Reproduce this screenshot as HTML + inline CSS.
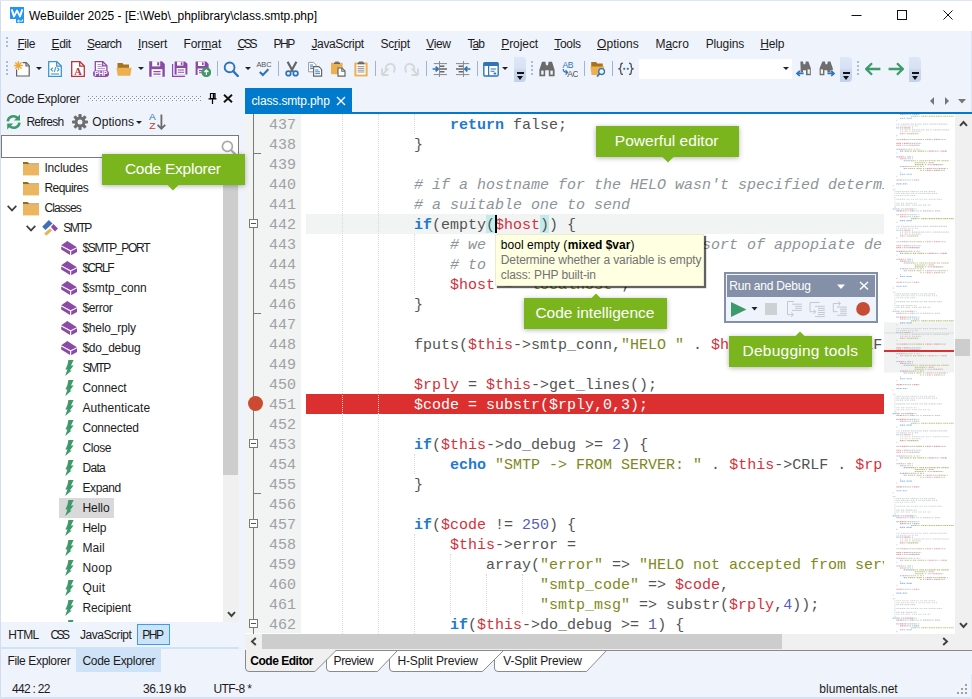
<!DOCTYPE html><html><head><meta charset="utf-8"><title>WeBuilder</title><style>
*{box-sizing:border-box;margin:0;padding:0}
html,body{width:972px;height:699px;overflow:hidden}
body{background:#eff3fb;font-family:"Liberation Sans",sans-serif;font-size:12px;color:#1b1b1b;position:relative}
.abs{position:absolute}
.t{position:absolute;white-space:nowrap;line-height:16px;height:16px}
u{text-decoration:underline;text-underline-offset:1px}
.sep{position:absolute;width:1px;background:#9fb3d6}
.grip{position:absolute;width:2px;height:2px;background:#a9bcdc}
.ovf{position:absolute;top:57px;width:12px;height:25px;border-radius:0 4px 4px 0;background:linear-gradient(#dfe7f6,#d6e1f3 45%,#c9d6ee 55%,#c3d1eb)}
.ovf:before{content:"";position:absolute;left:3px;top:15px;width:7px;height:2px;background:#111}
.ovf:after{content:"";position:absolute;left:3px;top:19px;border:3.5px solid transparent;border-top:4px solid #111;border-bottom:0}
.dd{position:absolute;width:0;height:0;border:3px solid transparent;border-top:3px solid #222;border-bottom:0}
#tree{left:1px;top:158px;width:238px;height:464px;background:#fff;overflow:hidden}
.row{position:absolute;left:0;height:20px;width:221px}
.row .t{top:2px}
#ed{left:245px;top:114px;width:639px;height:520px;background:#fff;overflow:hidden}
#gut{left:0;top:0;width:56px;height:519px;background:#f2f3f3}
.ln{position:absolute;left:24px;width:36px;height:20px;padding-top:2px;line-height:20px;font-family:"Liberation Mono",monospace;font-size:15px;color:#9da1a3}
.cl{position:absolute;left:61px;height:20px;padding-top:2px;line-height:20px;font-family:"Liberation Mono",monospace;font-size:15px;color:#545454;white-space:pre}
.k{color:#1f7ad0;font-weight:bold}
.v{color:#d5303a}
.s{color:#80881a}
.c{color:#8e9499;font-style:italic}
.n{color:#5560b8}
.guide{position:absolute;width:0;border-left:1px dotted #d9d9d9}
.call{position:absolute;background:#7ab51d;box-shadow:0 1px 5px rgba(0,0,0,.3)}
.call i{position:absolute;width:0;height:0;border:5.5px solid transparent}
.call i.dn{bottom:-5.5px;border-top:5.5px solid #7ab51d;border-bottom:0}
.call i.up{top:-5.5px;border-bottom:5.5px solid #7ab51d;border-top:0}
</style></head><body>
<div class="abs" style="left:0;top:0;width:972px;height:31px;background:#fff"></div>
<div class="abs" style="left:0;top:0;width:1px;height:699px;background:#d3ddef"></div>
<div class="abs" style="left:0;top:0;width:972px;height:1px;background:#dfe7f5"></div>
<div class="abs" style="left:0;top:697px;width:972px;height:2px;background:#d9e1f0"></div>
<div class="abs" style="left:971px;top:31px;width:1px;height:668px;background:#dfe6f3"></div>
<svg class="abs" style="left:10px;top:7px" width="14" height="16" viewBox="0 0 14 16"><path d="M0.400 0h13.200a0.400 0.400 0 0 1 0.400 0.400v15.200a0.400 0.400 0 0 1-0.400 0.400h-7.200a0.400 0.400 0 0 1-0.400-0.400v-3.600h-5.600a0.400 0.400 0 0 1-0.400-0.400v-11.200a0.400 0.400 0 0 1 0.400-0.400z" fill="#2394f2"/><path d="M1.700 2.400l2.300 7 3-5.800 3 5.800 2.300-7" fill="none" stroke="#fff" stroke-width="1.900" stroke-linejoin="round"/><path d="M12.600 12.400v1.700h-5M9.200 12.600l-1.700 1.500 1.700 1.500" fill="none" stroke="#fff" stroke-width="0.900"/></svg>
<span class="t" style="left:29px;top:8px;letter-spacing:0.006px;color:#000;">WeBuilder 2025 - [E:\Web\_phplibrary\class.smtp.php]</span>
<svg class="abs" style="left:840px;top:0" width="132" height="31" viewBox="0 0 132 31"><g stroke="#111" stroke-width="1" fill="none"><path d="M11.500 15.500h10"/><rect x="57.500" y="10.500" width="9" height="9"/><path d="M103.500 10.500l9 9M112.500 10.500l-9 9"/></g></svg>
<span class="t" style="left:17.5px;top:36px;letter-spacing:-0.478px;"><u>F</u>ile</span>
<span class="t" style="left:51.5px;top:36px;letter-spacing:-0.393px;"><u>E</u>dit</span>
<span class="t" style="left:87px;top:36px;letter-spacing:-0.644px;"><u>S</u>earch</span>
<span class="t" style="left:138px;top:36px;letter-spacing:-0.142px;"><u>I</u>nsert</span>
<span class="t" style="left:183.4px;top:36px;letter-spacing:-0.021px;">For<u>m</u>at</span>
<span class="t" style="left:237.4px;top:36px;letter-spacing:-2.288px;"><u>C</u>SS</span>
<span class="t" style="left:273.6px;top:36px;letter-spacing:-1.538px;">PHP</span>
<span class="t" style="left:311.5px;top:36px;letter-spacing:-0.391px;"><u>J</u>avaScript</span>
<span class="t" style="left:380.6px;top:36px;letter-spacing:-0.255px;">Sc<u>r</u>ipt</span>
<span class="t" style="left:426.3px;top:36px;letter-spacing:-0.364px;"><u>V</u>iew</span>
<span class="t" style="left:467.5px;top:36px;letter-spacing:-0.923px;">T<u>a</u>b</span>
<span class="t" style="left:501.2px;top:36px;letter-spacing:-0.058px;"><u>P</u>roject</span>
<span class="t" style="left:554.3px;top:36px;letter-spacing:-0.328px;"><u>T</u>ools</span>
<span class="t" style="left:597px;top:36px;letter-spacing:0.074px;"><u>O</u>ptions</span>
<span class="t" style="left:655.4px;top:36px;letter-spacing:0.015px;">M<u>a</u>cro</span>
<span class="t" style="left:705.7px;top:36px;letter-spacing:-0.143px;">Plugins</span>
<span class="t" style="left:760.3px;top:36px;letter-spacing:-0.226px;"><u>H</u>elp</span>
<div class="grip" style="left:6px;top:37px"></div>
<div class="grip" style="left:6px;top:41px"></div>
<div class="grip" style="left:6px;top:45px"></div>
<svg class="abs" style="left:14px;top:61px" width="16" height="16" viewBox="0 0 16 16"><path d="M8.600 1.700h3.600l3 3v10.300h-12.600v-6.400" fill="#fdfdfe" stroke="#606060" stroke-width="1.200"/><path d="M12 1.800v3.200h3.200" fill="none" stroke="#606060" stroke-width="1.200"/><g stroke="#f0a830" stroke-width="1.300" stroke-linecap="round"><path d="M4.400 0.600v7.800M0.500 4.500h7.800M1.700 1.800l5.400 5.400M7.100 1.800l-5.400 5.400"/></g></svg>
<svg class="abs" style="left:47px;top:61px" width="16" height="16" viewBox="0 0 16 16"><path d="M1.700 0.700h8.200l4.400 4.400v10.200h-12.600z" fill="#fff" stroke="#3f96cc" stroke-width="1.300"/><path d="M9.700 0.800v4.400h4.400" fill="none" stroke="#3f96cc" stroke-width="1.300"/><path d="M5.800 6.600l-1.800 1.900 1.800 1.900M10.200 6.600l1.800 1.900-1.800 1.900M8.800 6.200l-1.500 4.600" fill="none" stroke="#3f96cc" stroke-width="1.100"/><path d="M4 13h8" stroke="#3f96cc" stroke-width="1.100"/></svg>
<svg class="abs" style="left:70px;top:61px" width="16" height="16" viewBox="0 0 16 16"><path d="M1.700 0.700h8.200l4.400 4.400v10.200h-12.600z" fill="#fff" stroke="#b5363a" stroke-width="1.300"/><path d="M9.700 0.800v4.400h4.400" fill="none" stroke="#b5363a" stroke-width="1.300"/><text x="8" y="13.600" text-anchor="middle" font-family="Liberation Serif" font-weight="bold" font-size="10.500" fill="#b5363a">A</text></svg>
<svg class="abs" style="left:93px;top:61px" width="16" height="16" viewBox="0 0 16 16"><path d="M2.300 0.700h7.600l4 4v6h-11.600z" fill="#fff" stroke="#8b4aa8" stroke-width="1.300"/><path d="M9.700 0.800v4h4" fill="none" stroke="#8b4aa8" stroke-width="1.300"/><path d="M4.400 3.600h4.200M4.400 5.600h5.600M4.400 7.600h7.600" stroke="#b48ccc" stroke-width="1"/><rect x="0" y="9.400" width="16" height="6.600" rx="3.300" fill="#8b4aa8"/><text x="8" y="15" text-anchor="middle" font-family="Liberation Sans" font-weight="bold" font-size="6.400" fill="#fff">PHP</text></svg>
<svg class="abs" style="left:116px;top:61px" width="16" height="16" viewBox="0 0 16 16"><path d="M1.5 2h5l1 1.5h5.5v4h-11.5z" fill="#a8741a"/><path d="M0.4 6.8h15.2l-1.3 8h-12.6z" fill="#ecb050"/></svg>
<svg class="abs" style="left:149px;top:61px" width="16" height="16" viewBox="0 0 16 16"><path d="M0.200 0.200h12.800l2.800 2.800v12.800h-15.600z" fill="#8b4aa8"/><rect x="3.200" y="0.200" width="8" height="5.200" fill="#fff"/><rect x="8.200" y="1.200" width="2" height="3.200" fill="#8b4aa8"/><rect x="2.600" y="8.200" width="10.800" height="7.600" fill="#fff"/><path d="M4.400 10.600h7.200M4.400 13.200h7.200" stroke="#8b4aa8" stroke-width="1.300"/></svg>
<svg class="abs" style="left:172px;top:61px" width="16" height="16" viewBox="0 0 16 16"><path d="M0.6 3v12.4h12.4" fill="none" stroke="#8b4aa8" stroke-width="1.2"/><path d="M2.6 0.6h10.4l2.4 2.2v10.8h-12.8z" fill="#8b4aa8"/><rect x="5" y="0.6" width="6.4" height="4" fill="#fff"/><rect x="8.8" y="1.3" width="1.6" height="2.6" fill="#8b4aa8"/><rect x="4.6" y="7" width="8.8" height="6.6" fill="#fff"/><path d="M5.8 9h6.4M5.8 11.2h6.4" stroke="#8b4aa8" stroke-width="1.1"/></svg>
<svg class="abs" style="left:195px;top:61px" width="16" height="16" viewBox="0 0 16 16"><path d="M0.6 0.6h10.6l2.4 2.4v11h-13z" fill="#8b4aa8"/><rect x="3" y="0.6" width="6.6" height="4.4" fill="#fff"/><rect x="7" y="1.3" width="1.6" height="2.8" fill="#8b4aa8"/><rect x="2.6" y="7.6" width="8" height="6.4" fill="#fff"/><path d="M4 9.6h3M4 11.8h3" stroke="#8b4aa8" stroke-width="1.1"/><circle cx="11.300" cy="11.200" r="4.900" fill="#3d9a6a"/><path d="M11.4 14v-4.6M9.4 11l2-2 2 2" fill="none" stroke="#fff" stroke-width="1.2"/></svg>
<svg class="abs" style="left:223px;top:61px" width="16" height="16" viewBox="0 0 16 16"><circle cx="6.6" cy="6.4" r="4.9" fill="none" stroke="#2f74b8" stroke-width="1.9"/><path d="M10.2 10.2l4.6 4.8" stroke="#2f74b8" stroke-width="2.4" stroke-linecap="round"/></svg>
<svg class="abs" style="left:256px;top:61px" width="16" height="16" viewBox="0 0 16 16"><text x="8" y="6.4" text-anchor="middle" font-family="Liberation Sans" font-size="7.4" fill="#555">ABC</text><path d="M3.8 11l3 3 5.6-5.8" fill="none" stroke="#2f74b8" stroke-width="2"/></svg>
<svg class="abs" style="left:284px;top:61px" width="16" height="16" viewBox="0 0 16 16"><path d="M3.6 0.8l5.4 10M12.4 0.8l-5.4 10" stroke="#666" stroke-width="2.2"/><circle cx="4.4" cy="12.4" r="2.3" fill="none" stroke="#2f74b8" stroke-width="1.7"/><circle cx="11.6" cy="12.4" r="2.3" fill="none" stroke="#2f74b8" stroke-width="1.7"/></svg>
<svg class="abs" style="left:307px;top:61px" width="16" height="16" viewBox="0 0 16 16"><path d="M1.6 1.4h5l2.4 2.4v7h-7.4z" fill="#fff" stroke="#999" stroke-width="1"/><path d="M3 4h3M3 5.8h3M3 7.6h3" stroke="#2f74b8" stroke-width="0.9"/><path d="M6.6 5.6h5.2l2.8 2.8v6.8h-8z" fill="#fff" stroke="#666" stroke-width="1.2"/><path d="M8.2 9h3.4M8.2 10.8h4.8M8.2 12.6h4.8" stroke="#2f74b8" stroke-width="0.9"/></svg>
<svg class="abs" style="left:330px;top:61px" width="16" height="16" viewBox="0 0 16 16"><path d="M5.4 0.6h3.2l0.8 1.4h-4.8z" fill="#777"/><rect x="1" y="1.8" width="11.6" height="11.4" fill="#ecb050"/><rect x="4" y="1.6" width="6" height="1.4" fill="#666"/><path d="M8 7h4l3 3v5.2h-7z" fill="#fff" stroke="#666" stroke-width="1.2"/><path d="M11.8 7.2v3h3" fill="none" stroke="#666" stroke-width="1.1"/></svg>
<svg class="abs" style="left:353px;top:61px" width="16" height="16" viewBox="0 0 16 16"><rect x="1.4" y="1.6" width="13.2" height="13.8" fill="#ecb050"/><rect x="3.4" y="3.4" width="9.2" height="10.2" fill="#fff"/><path d="M6.2 0.4h3.6l1.2 1.6h-6z" fill="#777"/><rect x="4.6" y="1.8" width="6.8" height="1.4" fill="#666"/><path d="M4.6 5.6h6.8M4.6 7.4h6.8M4.6 9.2h6.8M4.6 11h6.8" stroke="#888" stroke-width="0.9"/></svg>
<svg class="abs" style="left:380px;top:61px" width="16" height="16" viewBox="0 0 16 16"><path d="M2 14V7.6M2 14h6.4M2.4 13.6l6-6" fill="none" stroke="#d2d8da" stroke-width="1.8"/><path d="M6 9.6c-1-4 1-6.8 4.4-6.8 3.2 0 5 2.8 4 6.8l-0.6 2" fill="none" stroke="#d2d8da" stroke-width="1.8"/></svg>
<svg class="abs" style="left:404px;top:61px" width="16" height="16" viewBox="0 0 16 16"><path d="M14 14V7.6M14 14H7.6M13.6 13.6l-6-6" fill="none" stroke="#d2d8da" stroke-width="1.8"/><path d="M10 9.6c1-4-1-6.8-4.400-6.800-3.200 0-5 2.800-4 6.800l0.600 2" fill="none" stroke="#d2d8da" stroke-width="1.8"/></svg>
<svg class="abs" style="left:432px;top:61px" width="16" height="16" viewBox="0 0 16 16"><path d="M7.500 0v16" stroke="#777" stroke-width="0.8"/><path d="M1.800 2.600h13.200M1.800 13.600h13.200" stroke="#888" stroke-width="1"/><path d="M8 5.200h4.400M8 8h7M8 10.800h4.400" stroke="#666" stroke-width="1.6"/><path d="M0.600 8h5.400M3.600 5.600l2.600 2.400-2.600 2.400" fill="none" stroke="#2f74b8" stroke-width="1.7"/></svg>
<svg class="abs" style="left:455px;top:61px" width="16" height="16" viewBox="0 0 16 16"><path d="M8.500 0v16" stroke="#777" stroke-width="0.8"/><path d="M1 2.600h13.200M1 13.600h13.200" stroke="#888" stroke-width="1"/><path d="M3.600 5.200h4.400M1 8h7M3.600 10.800h4.400" stroke="#666" stroke-width="1.6"/><path d="M15.400 8h-5.400M12.400 5.600l-2.600 2.400 2.600 2.400" fill="none" stroke="#2f74b8" stroke-width="1.7"/></svg>
<svg class="abs" style="left:483px;top:61px" width="16" height="16" viewBox="0 0 16 16"><rect x="0.800" y="1.600" width="14.400" height="13.400" rx="1.200" fill="#fff" stroke="#2f74b8" stroke-width="1.400"/><rect x="0.800" y="1.600" width="14.400" height="3.400" fill="#2f74b8"/><path d="M5.600 5v10" stroke="#2f74b8" stroke-width="1.200"/><path d="M7.600 8h5.600M7.600 10.200h4" stroke="#2f74b8" stroke-width="1.100"/><rect x="10.600" y="11.600" width="2.600" height="1.800" fill="#2f74b8"/></svg>
<svg class="abs" style="left:539px;top:61px" width="16" height="16" viewBox="0 0 16 16"><path d="M3 0.800h3.400l0.600 3.400h2l0.600-3.400h3.400l2.600 8v6.400h-5.800v-6h-3.600v6h-5.800v-6.400z" fill="#6a6a6a"/><rect x="2.200" y="9.600" width="2.400" height="4" fill="#eff3fb"/><rect x="11.400" y="9.600" width="2.400" height="4" fill="#eff3fb"/></svg>
<svg class="abs" style="left:562px;top:61px" width="16" height="16" viewBox="0 0 16 16"><text x="5.800" y="7" text-anchor="middle" font-family="Liberation Sans" font-size="8.600" letter-spacing="-0.500" fill="#2f74b8">AB</text><text x="10.800" y="15.600" text-anchor="middle" font-family="Liberation Sans" font-size="8.600" letter-spacing="-0.500" fill="#555">AC</text><path d="M1.200 8c0 2.800 1.800 3.400 4 3.400M3.600 9.200l2 2.200-2 2.200" fill="none" stroke="#2f74b8" stroke-width="1.200"/></svg>
<svg class="abs" style="left:590px;top:61px" width="16" height="16" viewBox="0 0 16 16"><path d="M1.200 1h5l1 1.500h5.600v4h-11.600z" fill="#a8741a"/><path d="M0.400 5.600h13.800l-1 8.400h-11.600z" fill="#ecb050"/><circle cx="11.600" cy="10.600" r="2.900" fill="#eff3fb" stroke="#2f74b8" stroke-width="1.300"/><path d="M9.600 12.800l-2.600 2.800" stroke="#2f74b8" stroke-width="1.600"/></svg>
<svg class="abs" style="left:618px;top:61px" width="16" height="16" viewBox="0 0 16 16"><path d="M5 2.200c-2 0-2.200 0.800-2.200 2.200 0 1.800-0.200 3-1.600 3.400 1.400 0.400 1.600 1.600 1.600 3.400 0 1.400 0.200 2.200 2.200 2.200M11 2.200c2 0 2.200 0.800 2.200 2.200 0 1.800 0.200 3 1.600 3.400-1.400 0.400-1.600 1.600-1.600 3.400 0 1.400-0.200 2.200-2.200 2.200" fill="none" stroke="#555" stroke-width="1.300"/><circle cx="6.200" cy="7.800" r="1.100" fill="#2f74b8"/><circle cx="9.800" cy="7.800" r="1.100" fill="#2f74b8"/></svg>
<svg class="abs" style="left:796px;top:61px" width="16" height="16" viewBox="0 0 16 16"><path d="M4.400 0.600h2.600l0.500 2.600h1.800l0.500-2.600h2.600l2.400 6.600v7h-4.800v-5h-3v2h-2.400v-4z" fill="#6e6e6e"/><rect x="11.600" y="8.400" width="2.200" height="4.400" fill="#eff3fb"/><path d="M7.600 12.400h-6.400M3.800 9.800l-2.800 2.600 2.800 2.600" fill="none" stroke="#2f74b8" stroke-width="1.700"/></svg>
<svg class="abs" style="left:819px;top:61px" width="16" height="16" viewBox="0 0 16 16"><path d="M3.400 0.600h2.600l0.500 2.600h1.800l0.500-2.600h2.600l2.400 6.600v2h-2.400v2h-3v-2h-3v5h-4.800v-7z" fill="#6e6e6e"/><rect x="1.800" y="8.400" width="2.200" height="4.400" fill="#eff3fb"/><path d="M8.400 12.400h6.400M12.200 9.800l2.800 2.600-2.800 2.600" fill="none" stroke="#2f74b8" stroke-width="1.700"/></svg>
<svg class="abs" style="left:865px;top:61px" width="16" height="16" viewBox="0 0 16 16"><path d="M15.400 8h-13M7 2.200l-5.800 5.800 5.800 5.800" fill="none" stroke="#3d9a6a" stroke-width="2.300"/></svg>
<svg class="abs" style="left:888px;top:61px" width="16" height="16" viewBox="0 0 16 16"><path d="M0.600 8h13M9 2.200l5.800 5.800-5.800 5.800" fill="none" stroke="#3d9a6a" stroke-width="2.300"/></svg>
<div class="sep" style="left:217px;top:61px;height:15px"></div>
<div class="sep" style="left:278px;top:61px;height:15px"></div>
<div class="sep" style="left:375px;top:61px;height:15px"></div>
<div class="sep" style="left:426px;top:61px;height:15px"></div>
<div class="sep" style="left:477px;top:61px;height:15px"></div>
<div class="sep" style="left:584px;top:61px;height:15px"></div>
<div class="sep" style="left:612px;top:61px;height:15px"></div>
<div class="dd" style="left:36px;top:67px"></div>
<div class="dd" style="left:138px;top:67px"></div>
<div class="dd" style="left:245px;top:67px"></div>
<div class="dd" style="left:502px;top:67px"></div>
<div class="grip" style="left:6px;top:61px"></div>
<div class="grip" style="left:6px;top:65px"></div>
<div class="grip" style="left:6px;top:69px"></div>
<div class="grip" style="left:6px;top:73px"></div>
<div class="grip" style="left:531px;top:61px"></div>
<div class="grip" style="left:531px;top:65px"></div>
<div class="grip" style="left:531px;top:69px"></div>
<div class="grip" style="left:531px;top:73px"></div>
<div class="grip" style="left:857px;top:61px"></div>
<div class="grip" style="left:857px;top:65px"></div>
<div class="grip" style="left:857px;top:69px"></div>
<div class="grip" style="left:857px;top:73px"></div>
<div class="ovf" style="left:514px"></div>
<div class="ovf" style="left:840px"></div>
<div class="ovf" style="left:909px"></div>
<div class="abs" style="left:639px;top:59px;width:153px;height:20px;background:#fff"></div>
<div class="dd" style="left:783px;top:67px"></div>
<span class="t" style="left:6.4px;top:91px;letter-spacing:-0.259px;">Code Explorer</span>
<svg class="abs" style="left:88px;top:96px" width="113" height="6" viewBox="0 0 113 6" shape-rendering="crispEdges"><defs><pattern id="gp" width="4" height="4" patternUnits="userSpaceOnUse"><rect x="0" y="0" width="1" height="1" fill="#8f8f8f"/><rect x="2" y="2" width="1" height="1" fill="#8f8f8f"/><rect x="1" y="1" width="1" height="1" fill="#fff" opacity=".7"/><rect x="3" y="3" width="1" height="1" fill="#fff" opacity=".7"/></pattern></defs><rect width="113" height="6" fill="url(#gp)"/></svg>
<svg class="abs" style="left:208px;top:93px" width="9" height="11" viewBox="0 0 9 11"><path d="M2.500 0.500h4.500v5h-4.500zM0.500 5.800h8M4.500 6v5" fill="none" stroke="#000" stroke-width="1.200"/><path d="M5.600 0.500v5" stroke="#000" stroke-width="1.600"/></svg>
<svg class="abs" style="left:223px;top:94px" width="10" height="9" viewBox="0 0 10 9"><path d="M1 0.800l8 7.400M9 0.800l-8 7.400" stroke="#111" stroke-width="1.900"/></svg>
<svg class="abs" style="left:6px;top:114px" width="16" height="16" viewBox="0 0 16 16"><path d="M1.800 7.400a5.600 5.600 0 0 1 9.800-3.200" fill="none" stroke="#3d9a6a" stroke-width="2.600"/><path d="M14 0.400v6h-6z" fill="#3d9a6a"/><path d="M13.400 8.600a5.600 5.600 0 0 1-9.800 3.200" fill="none" stroke="#3d9a6a" stroke-width="2.600"/><path d="M1.200 15.600v-6h6z" fill="#3d9a6a"/></svg>
<span class="t" style="left:26.4px;top:114px;letter-spacing:-0.686px;">Refresh</span>
<svg class="abs" style="left:72px;top:114px" width="16" height="16" viewBox="0 0 16 16"><g fill="#6e6e6e"><circle cx="8" cy="8" r="5.400"/><g id="gt"><rect x="6.400" y="0" width="3.200" height="16" rx="0.800"/></g><rect x="6.400" y="0" width="3.200" height="16" rx="0.800" transform="rotate(45 8 8)"/><rect x="6.400" y="0" width="3.200" height="16" rx="0.800" transform="rotate(90 8 8)"/><rect x="6.400" y="0" width="3.200" height="16" rx="0.800" transform="rotate(135 8 8)"/></g><circle cx="8" cy="8" r="2.500" fill="#eff3fb"/></svg>
<span class="t" style="left:92.3px;top:114px;letter-spacing:0.058px;">Options</span>
<div class="dd" style="left:136px;top:121px"></div>
<svg class="abs" style="left:148px;top:113px" width="19" height="18" viewBox="0 0 19 18"><g transform="scale(1.180 1)"><text x="3.700" y="7.100" text-anchor="middle" font-family="Liberation Sans" font-size="8.600" fill="#2f74b8">A</text><text x="3.700" y="16.400" text-anchor="middle" font-family="Liberation Sans" font-size="8.800" fill="#c8402c">Z</text></g><path d="M13.400 1.400v14M9.600 11.800l3.800 4 3.800-4" fill="none" stroke="#6a6a6a" stroke-width="1.800"/></svg>
<div class="abs" style="left:1px;top:135px;width:238px;height:23px;background:#fff;border:1px solid #7a7a7a"></div>
<svg class="abs" style="left:221px;top:140px" width="16" height="16" viewBox="0 0 16 16"><circle cx="6.400" cy="6.400" r="5" fill="none" stroke="#a9a9a9" stroke-width="1.700"/><path d="M10 10l5 5" stroke="#a9a9a9" stroke-width="2.200"/></svg>
<div id="tree" class="abs">
<div class="row" style="top:0px"><svg class="abs" style="left:22px;top:3px" width="16" height="15" viewBox="0 0 16 15"><path d="M0 1h4.500l1.800 1.400h9.700v1h-16z" fill="#9a6a14"/><rect x="0" y="3.600" width="16" height="10.800" fill="#ecb661"/></svg><span class="t" style="left:43.4px;top:2px;letter-spacing:-0.156px;">Includes</span></div>
<div class="row" style="top:20px"><svg class="abs" style="left:22px;top:3px" width="16" height="15" viewBox="0 0 16 15"><path d="M0 1h4.500l1.800 1.400h9.700v1h-16z" fill="#9a6a14"/><rect x="0" y="3.600" width="16" height="10.800" fill="#ecb661"/></svg><span class="t" style="left:43.4px;top:2px;letter-spacing:-0.532px;">Requires</span></div>
<div class="row" style="top:40px"><svg class="abs" style="left:6px;top:7px" width="10" height="7" viewBox="0 0 10 7"><path d="M0.700 0.800l4.300 4.600 4.300-4.600" fill="none" stroke="#404040" stroke-width="1.700"/></svg><svg class="abs" style="left:22px;top:3px" width="16" height="15" viewBox="0 0 16 15"><path d="M0 1h4.500l1.800 1.400h9.700v1h-16z" fill="#9a6a14"/><rect x="0" y="3.600" width="16" height="10.800" fill="#ecb661"/></svg><span class="t" style="left:43.4px;top:2px;letter-spacing:-0.896px;">Classes</span></div>
<div class="row" style="top:60px"><svg class="abs" style="left:25px;top:7px" width="10" height="7" viewBox="0 0 10 7"><path d="M0.700 0.800l4.300 4.600 4.300-4.600" fill="none" stroke="#404040" stroke-width="1.700"/></svg><svg class="abs" style="left:41px;top:2px" width="17" height="16" viewBox="0 0 17 16"><path d="M6.800 0.100l3.700 3.500-7 6.400-3.300-3.300z" fill="#3f72b4"/><path d="M11.400 4.100l4.600 4.400-3 3.100-4.100-4.500z" fill="#8b4aa8"/><path d="M8.100 8.300l2 2.100-5.700 5.400-2.300-2.400z" fill="#e9b35c"/></svg><span class="t" style="left:62.3px;top:2px;letter-spacing:-1.445px;">SMTP</span></div>
<div class="row" style="top:80px"><svg class="abs" style="left:60px;top:2px" width="17" height="16" viewBox="0 0 17 16"><path d="M0.200 5.200l6.100-4.100 9.600 6.100-6.300 3.100z" fill="#8b4aa8"/><path d="M0.200 6.400l8.800 4.800v3.800l-8.800-5.400z" fill="#8b4aa8"/><path d="M10.200 11.200l5.800-3v3.800l-5.800 3.200z" fill="#8b4aa8"/></svg><span class="t" style="left:81.4px;top:2px;letter-spacing:-1.289px;">$SMTP_PORT</span></div>
<div class="row" style="top:100px"><svg class="abs" style="left:60px;top:2px" width="17" height="16" viewBox="0 0 17 16"><path d="M0.200 5.200l6.100-4.100 9.600 6.100-6.300 3.100z" fill="#8b4aa8"/><path d="M0.200 6.400l8.800 4.800v3.800l-8.800-5.400z" fill="#8b4aa8"/><path d="M10.200 11.200l5.800-3v3.800l-5.800 3.200z" fill="#8b4aa8"/></svg><span class="t" style="left:81.4px;top:2px;letter-spacing:-1.452px;">$CRLF</span></div>
<div class="row" style="top:120px"><svg class="abs" style="left:60px;top:2px" width="17" height="16" viewBox="0 0 17 16"><path d="M0.200 5.200l6.100-4.100 9.600 6.100-6.300 3.100z" fill="#8b4aa8"/><path d="M0.200 6.400l8.800 4.800v3.800l-8.800-5.400z" fill="#8b4aa8"/><path d="M10.200 11.200l5.800-3v3.800l-5.800 3.200z" fill="#8b4aa8"/></svg><span class="t" style="left:81.4px;top:2px;letter-spacing:-0.108px;">$smtp_conn</span></div>
<div class="row" style="top:140px"><svg class="abs" style="left:60px;top:2px" width="17" height="16" viewBox="0 0 17 16"><path d="M0.200 5.200l6.100-4.100 9.600 6.100-6.300 3.100z" fill="#8b4aa8"/><path d="M0.200 6.400l8.800 4.800v3.800l-8.800-5.400z" fill="#8b4aa8"/><path d="M10.200 11.200l5.800-3v3.800l-5.800 3.200z" fill="#8b4aa8"/></svg><span class="t" style="left:81.4px;top:2px;letter-spacing:-0.322px;">$error</span></div>
<div class="row" style="top:160px"><svg class="abs" style="left:60px;top:2px" width="17" height="16" viewBox="0 0 17 16"><path d="M0.200 5.200l6.100-4.100 9.600 6.100-6.300 3.100z" fill="#8b4aa8"/><path d="M0.200 6.400l8.800 4.800v3.800l-8.800-5.400z" fill="#8b4aa8"/><path d="M10.200 11.200l5.800-3v3.800l-5.800 3.200z" fill="#8b4aa8"/></svg><span class="t" style="left:81.4px;top:2px;letter-spacing:-0.197px;">$helo_rply</span></div>
<div class="row" style="top:180px"><svg class="abs" style="left:60px;top:2px" width="17" height="16" viewBox="0 0 17 16"><path d="M0.200 5.200l6.100-4.100 9.600 6.100-6.300 3.100z" fill="#8b4aa8"/><path d="M0.200 6.400l8.800 4.800v3.800l-8.800-5.400z" fill="#8b4aa8"/><path d="M10.200 11.200l5.800-3v3.800l-5.800 3.200z" fill="#8b4aa8"/></svg><span class="t" style="left:81.4px;top:2px;letter-spacing:-0.233px;">$do_debug</span></div>
<div class="row" style="top:200px"><svg class="abs" style="left:64px;top:2px" width="9" height="16" viewBox="0 0 9 16"><path d="M3.400 0h5.200l-2.600 5.600h2.600l-3.800 5h2l-6.600 5.400 2.200-6.600h-2l2-4.400z" fill="#3d9a6a"/></svg><span class="t" style="left:81.4px;top:2px;letter-spacing:-1.512px;">SMTP</span></div>
<div class="row" style="top:220px"><svg class="abs" style="left:64px;top:2px" width="9" height="16" viewBox="0 0 9 16"><path d="M3.400 0h5.200l-2.600 5.600h2.600l-3.800 5h2l-6.600 5.400 2.200-6.600h-2l2-4.400z" fill="#3d9a6a"/></svg><span class="t" style="left:81.4px;top:2px;letter-spacing:-0.066px;">Connect</span></div>
<div class="row" style="top:240px"><svg class="abs" style="left:64px;top:2px" width="9" height="16" viewBox="0 0 9 16"><path d="M3.400 0h5.200l-2.600 5.600h2.600l-3.800 5h2l-6.600 5.400 2.200-6.600h-2l2-4.400z" fill="#3d9a6a"/></svg><span class="t" style="left:81.4px;top:2px;letter-spacing:0.09px;">Authenticate</span></div>
<div class="row" style="top:260px"><svg class="abs" style="left:64px;top:2px" width="9" height="16" viewBox="0 0 9 16"><path d="M3.400 0h5.200l-2.600 5.600h2.600l-3.800 5h2l-6.600 5.400 2.200-6.600h-2l2-4.400z" fill="#3d9a6a"/></svg><span class="t" style="left:81.4px;top:2px;letter-spacing:-0.18px;">Connected</span></div>
<div class="row" style="top:280px"><svg class="abs" style="left:64px;top:2px" width="9" height="16" viewBox="0 0 9 16"><path d="M3.400 0h5.200l-2.600 5.600h2.600l-3.800 5h2l-6.600 5.400 2.200-6.600h-2l2-4.400z" fill="#3d9a6a"/></svg><span class="t" style="left:81.4px;top:2px;letter-spacing:-0.395px;">Close</span></div>
<div class="row" style="top:300px"><svg class="abs" style="left:64px;top:2px" width="9" height="16" viewBox="0 0 9 16"><path d="M3.400 0h5.200l-2.600 5.600h2.600l-3.800 5h2l-6.600 5.400 2.200-6.600h-2l2-4.400z" fill="#3d9a6a"/></svg><span class="t" style="left:81.4px;top:2px;letter-spacing:-0.649px;">Data</span></div>
<div class="row" style="top:320px"><svg class="abs" style="left:64px;top:2px" width="9" height="16" viewBox="0 0 9 16"><path d="M3.400 0h5.200l-2.600 5.600h2.600l-3.800 5h2l-6.600 5.400 2.200-6.600h-2l2-4.400z" fill="#3d9a6a"/></svg><span class="t" style="left:81.4px;top:2px;letter-spacing:-0.38px;">Expand</span></div>
<div class="row" style="top:340px"><div class="abs" style="left:58px;top:0;width:55px;height:20px;background:#d9d9d9"></div><svg class="abs" style="left:64px;top:2px" width="9" height="16" viewBox="0 0 9 16"><path d="M3.400 0h5.200l-2.600 5.600h2.600l-3.800 5h2l-6.600 5.400 2.200-6.600h-2l2-4.400z" fill="#3d9a6a"/></svg><span class="t" style="left:81.4px;top:2px;letter-spacing:-0.036px;">Hello</span></div>
<div class="row" style="top:360px"><svg class="abs" style="left:64px;top:2px" width="9" height="16" viewBox="0 0 9 16"><path d="M3.400 0h5.200l-2.600 5.600h2.600l-3.800 5h2l-6.600 5.400 2.200-6.600h-2l2-4.400z" fill="#3d9a6a"/></svg><span class="t" style="left:81.4px;top:2px;letter-spacing:-0.193px;">Help</span></div>
<div class="row" style="top:380px"><svg class="abs" style="left:64px;top:2px" width="9" height="16" viewBox="0 0 9 16"><path d="M3.400 0h5.200l-2.600 5.600h2.600l-3.800 5h2l-6.600 5.400 2.200-6.600h-2l2-4.400z" fill="#3d9a6a"/></svg><span class="t" style="left:81.4px;top:2px;letter-spacing:0.066px;">Mail</span></div>
<div class="row" style="top:400px"><svg class="abs" style="left:64px;top:2px" width="9" height="16" viewBox="0 0 9 16"><path d="M3.400 0h5.200l-2.600 5.600h2.600l-3.800 5h2l-6.600 5.400 2.200-6.600h-2l2-4.400z" fill="#3d9a6a"/></svg><span class="t" style="left:81.4px;top:2px;letter-spacing:0.305px;">Noop</span></div>
<div class="row" style="top:420px"><svg class="abs" style="left:64px;top:2px" width="9" height="16" viewBox="0 0 9 16"><path d="M3.400 0h5.200l-2.600 5.600h2.600l-3.800 5h2l-6.600 5.400 2.200-6.600h-2l2-4.400z" fill="#3d9a6a"/></svg><span class="t" style="left:81.4px;top:2px;letter-spacing:0.197px;">Quit</span></div>
<div class="row" style="top:440px"><svg class="abs" style="left:64px;top:2px" width="9" height="16" viewBox="0 0 9 16"><path d="M3.400 0h5.200l-2.600 5.600h2.600l-3.800 5h2l-6.600 5.400 2.200-6.600h-2l2-4.400z" fill="#3d9a6a"/></svg><span class="t" style="left:81.4px;top:2px;letter-spacing:-0.153px;">Recipient</span></div>
<div class="row" style="top:460px"><svg class="abs" style="left:64px;top:2px" width="9" height="16" viewBox="0 0 9 16"><path d="M3.400 0h5.200l-2.600 5.600h2.600l-3.800 5h2l-6.600 5.400 2.200-6.600h-2l2-4.400z" fill="#3d9a6a"/></svg><span class="t" style="left:81.4px;top:2px;letter-spacing:-0.937px;">Reset</span></div>
<div class="abs" style="left:222px;top:0;width:16px;height:464px;background:#f0f0f0"></div>
<div class="abs" style="left:222px;top:17px;width:15px;height:300px;background:#cdcdcd"></div>
<svg class="abs" style="left:225.5px;top:452.5px" width="9" height="7" viewBox="0 0 9 7"><path d="M1 1.200l3.500 3.800 3.500-3.800" fill="none" stroke="#404040" stroke-width="1.900"/></svg>
</div>
<div class="abs" style="left:1px;top:647px;width:238px;height:2px;background:#cfe3f8"></div>
<span class="t" style="left:8.3px;top:627px;letter-spacing:-0.555px;">HTML</span>
<span class="t" style="left:50.4px;top:627px;letter-spacing:-2.537px;">CSS</span>
<span class="t" style="left:80px;top:627px;letter-spacing:-0.458px;">JavaScript</span>
<div class="abs" style="left:137px;top:624px;width:33px;height:21px;background:#cce4f7;border:1px solid #3c9cf0"></div>
<span class="t" style="left:142.2px;top:627px;letter-spacing:-1.437px;">PHP</span>
<div class="abs" style="left:76px;top:649px;width:85px;height:23px;background:#cfe3f8"></div>
<span class="t" style="left:7.4px;top:653px;letter-spacing:-0.338px;">File Explorer</span>
<span class="t" style="left:82.4px;top:653px;letter-spacing:-0.292px;">Code Explorer</span>
<span class="t" style="left:12px;top:681px;letter-spacing:-0.71px;">442 : 22</span>
<span class="t" style="left:143px;top:681px;letter-spacing:-0.405px;">36.19 kb</span>
<span class="t" style="left:213.5px;top:681px;letter-spacing:-0.583px;">UTF-8 *</span>
<span class="t" style="left:819.3px;top:681px;letter-spacing:0.027px;">blumentals.net</span>
<svg class="abs" style="left:956px;top:683px" width="12" height="12" viewBox="0 0 12 12"><g fill="#a0a0a0"><rect x="9" y="1" width="2" height="2"/><rect x="5" y="5" width="2" height="2"/><rect x="9" y="5" width="2" height="2"/><rect x="1" y="9" width="2" height="2"/><rect x="5" y="9" width="2" height="2"/><rect x="9" y="9" width="2" height="2"/></g></svg>
<div class="abs" style="left:245px;top:88px;width:107px;height:25px;background:#007acc"></div>
<span class="t" style="left:251.5px;top:93px;letter-spacing:-0.133px;color:#fff;">class.smtp.php</span>
<svg class="abs" style="left:336px;top:96px" width="10" height="10" viewBox="0 0 10 10"><path d="M1 1l8 8M9 1l-8 8" stroke="#fff" stroke-width="1.400"/></svg>
<div class="abs" style="left:245px;top:112px;width:727px;height:2px;background:#007acc"></div>
<svg class="abs" style="left:929px;top:96px" width="42" height="10" viewBox="0 0 42 10"><path d="M5 1v8l-4-4zM16 1v8l4-4z" fill="#777"/><path d="M29 3h8l-4 4.500z" fill="#777"/></svg>
<div id="ed" class="abs">
<div id="gut" class="abs"></div>
<div class="abs" style="left:61px;top:100px;width:578px;height:20px;background:#f2f4f4"></div>
<div class="abs" style="left:61px;top:280px;width:578px;height:20px;background:#dc2f2f"></div>
<div class="guide" style="left:97px;top:0;height:520px"></div>
<div class="guide" style="left:133px;top:0;height:520px"></div>
<div class="guide" style="left:169px;top:0px;height:20px"></div>
<div class="guide" style="left:169px;top:120px;height:60px"></div>
<div class="guide" style="left:169px;top:340px;height:20px"></div>
<div class="guide" style="left:169px;top:420px;height:100px"></div>
<div class="guide" style="left:205px;top:440px;height:60px"></div>
<div class="guide" style="left:241px;top:460px;height:40px"></div>
<div class="guide" style="left:277px;top:460px;height:40px"></div>
<div class="abs" style="left:241px;top:101px;width:9px;height:18px;background:#c2ecec"></div>
<div class="abs" style="left:295px;top:101px;width:9px;height:18px;background:#c2ecec"></div>
<div class="ln" style="top:0px">437</div>
<div class="cl" style="top:0px">                <span class="k">return</span> false;</div>
<div class="ln" style="top:20px">438</div>
<div class="cl" style="top:20px">            }</div>
<div class="ln" style="top:40px">439</div>
<div class="ln" style="top:60px">440</div>
<div class="cl" style="top:60px">            <span class="c"># if a hostname for the HELO wasn&#x27;t specified determine</span></div>
<div class="ln" style="top:80px">441</div>
<div class="cl" style="top:80px">            <span class="c"># a suitable one to send</span></div>
<div class="ln" style="top:100px">442</div>
<div class="cl" style="top:100px">            <span class="k">if</span>(empty(<span class="v">$host</span>)) {</div>
<div class="ln" style="top:120px">443</div>
<div class="cl" style="top:120px">                <span class="c"># we need to determine some sort of appopiate default</span></div>
<div class="ln" style="top:140px">444</div>
<div class="cl" style="top:140px">                <span class="c"># to send to the server</span></div>
<div class="ln" style="top:160px">445</div>
<div class="cl" style="top:160px">                <span class="v">$host</span> = <span class="s">&quot;localhost&quot;</span>;</div>
<div class="ln" style="top:180px">446</div>
<div class="cl" style="top:180px">            }</div>
<div class="ln" style="top:200px">447</div>
<div class="ln" style="top:220px">448</div>
<div class="cl" style="top:220px">            fputs(<span class="v">$this</span>-&gt;smtp_conn,<span class="s">&quot;HELO &quot;</span> . <span class="v">$host</span> . <span class="v">$this</span>-&gt;CRLF);</div>
<div class="ln" style="top:240px">449</div>
<div class="ln" style="top:260px">450</div>
<div class="cl" style="top:260px">            <span class="v">$rply</span> = <span class="v">$this</span>-&gt;get_lines();</div>
<div class="ln" style="top:280px">451</div>
<div class="cl" style="top:280px;color:#fff">            $code = substr($rply,0,3);</div>
<div class="ln" style="top:300px">452</div>
<div class="ln" style="top:320px">453</div>
<div class="cl" style="top:320px">            <span class="k">if</span>(<span class="v">$this</span>-&gt;do_debug &gt;= <span class="n">2</span>) {</div>
<div class="ln" style="top:340px">454</div>
<div class="cl" style="top:340px">                <span class="k">echo</span> <span class="s">&quot;SMTP -&gt; FROM SERVER: &quot;</span> . <span class="v">$this</span>-&gt;CRLF . <span class="v">$rply</span>;</div>
<div class="ln" style="top:360px">455</div>
<div class="cl" style="top:360px">            }</div>
<div class="ln" style="top:380px">456</div>
<div class="ln" style="top:400px">457</div>
<div class="cl" style="top:400px">            <span class="k">if</span>(<span class="v">$code</span> != <span class="n">250</span>) {</div>
<div class="ln" style="top:420px">458</div>
<div class="cl" style="top:420px">                <span class="v">$this</span>-&gt;error =</div>
<div class="ln" style="top:440px">459</div>
<div class="cl" style="top:440px">                    array(<span class="s">&quot;error&quot;</span> =&gt; <span class="s">&quot;HELO not accepted from server&quot;</span>,</div>
<div class="ln" style="top:460px">460</div>
<div class="cl" style="top:460px">                          <span class="s">&quot;smtp_code&quot;</span> =&gt; <span class="v">$code</span>,</div>
<div class="ln" style="top:480px">461</div>
<div class="cl" style="top:480px">                          <span class="s">&quot;smtp_msg&quot;</span> =&gt; substr(<span class="v">$rply</span>,<span class="n">4</span>));</div>
<div class="ln" style="top:500px">462</div>
<div class="cl" style="top:500px">                <span class="k">if</span>(<span class="v">$this</span>-&gt;do_debug &gt;= <span class="n">1</span>) {</div>
<div class="abs" style="left:250px;top:101px;width:2px;height:18px;background:#000"></div>
<div class="abs" style="left:8px;top:0;width:1px;height:520px;background:#7a7a7a"></div>
<div class="abs" style="left:8px;top:39px;width:8px;height:1px;background:#7a7a7a"></div>
<div class="abs" style="left:8px;top:199px;width:8px;height:1px;background:#7a7a7a"></div>
<div class="abs" style="left:8px;top:379px;width:8px;height:1px;background:#7a7a7a"></div>
<div class="abs" style="left:4px;top:105px;width:9px;height:9px;background:#fff;border:1px solid #7a7a7a"></div><div class="abs" style="left:6px;top:109px;width:5px;height:1px;background:#555"></div>
<div class="abs" style="left:4px;top:325px;width:9px;height:9px;background:#fff;border:1px solid #7a7a7a"></div><div class="abs" style="left:6px;top:329px;width:5px;height:1px;background:#555"></div>
<div class="abs" style="left:4px;top:405px;width:9px;height:9px;background:#fff;border:1px solid #7a7a7a"></div><div class="abs" style="left:6px;top:409px;width:5px;height:1px;background:#555"></div>
<div class="abs" style="left:4px;top:505px;width:9px;height:9px;background:#fff;border:1px solid #7a7a7a"></div><div class="abs" style="left:6px;top:509px;width:5px;height:1px;background:#555"></div>
<div class="abs" style="left:3px;top:282px;width:15px;height:15px;border-radius:8px;background:#cc4a32"></div>
</div>
<div class="abs" style="left:884px;top:114px;width:71px;height:520px;background:#fff;overflow:hidden"><svg width="71" height="520" viewBox="0 0 71 520"><rect x="0" y="208.300" width="70" height="50.200" fill="#f1f2f2"/><rect x="0" y="218" width="70" height="2" fill="#e6e8e8"/><path d="M16.0 0.4h4.6M20.6 13.9h4.6M16.0 19.7h4.6M17.9 25.5h4.6M42.7 25.5h4.6M50.1 25.5h4.6M12.4 29.4h4.6M19.7 29.4h4.6M12.4 31.3h4.6M26.2 31.3h4.6M15.1 35.2h4.6M44.6 37.1h4.6M57.4 37.1h4.6M15.1 42.9h4.6M16.0 44.8h4.6M44.6 48.7h4.6M50.1 50.6h4.6M18.8 52.5h4.6M42.7 54.5h4.6M42.7 56.4h4.6M50.1 56.4h4.6M12.4 66.0h4.6M29.8 66.0h4.6M22.5 95.0h4.6M12.4 96.9h4.6M16.0 100.8h4.6M16.0 102.7h4.6M20.6 116.2h4.6M16.0 122.0h4.6M17.9 127.8h4.6M42.7 127.8h4.6M50.1 127.8h4.6M12.4 131.7h4.6M19.7 131.7h4.6M12.4 133.6h4.6M26.2 133.6h4.6M15.1 137.4h4.6M44.6 139.4h4.6M57.4 139.4h4.6M15.1 145.2h4.6M16.0 147.1h4.6M44.6 151.0h4.6M50.1 152.9h4.6M18.8 154.8h4.6M42.7 156.7h4.6M42.7 158.7h4.6M50.1 158.7h4.6M12.4 168.3h4.6M29.8 168.3h4.6M22.5 197.3h4.6M12.4 199.2h4.6M16.0 203.1h4.6M16.0 205.0h4.6M20.6 218.5h4.6M16.0 224.3h4.6M17.9 230.1h4.6M42.7 230.1h4.6M50.1 230.1h4.6M12.4 233.9h4.6M19.7 233.9h4.6M12.4 235.9h4.6M26.2 235.9h4.6M15.1 239.7h4.6M44.6 241.7h4.6M57.4 241.7h4.6M15.1 247.5h4.6M16.0 249.4h4.6M44.6 253.2h4.6M50.1 255.2h4.6M18.8 257.1h4.6M42.7 259.0h4.6M42.7 261.0h4.6M50.1 261.0h4.6M12.4 270.6h4.6M29.8 270.6h4.6M22.5 299.6h4.6M12.4 301.5h4.6M16.0 305.4h4.6M16.0 307.3h4.6M20.6 320.8h4.6M16.0 326.6h4.6M17.9 332.4h4.6M42.7 332.4h4.6M50.1 332.4h4.6M12.4 336.2h4.6M19.7 336.2h4.6M12.4 338.2h4.6M26.2 338.2h4.6M15.1 342.0h4.6M44.6 343.9h4.6M57.4 343.9h4.6M15.1 349.7h4.6M16.0 351.7h4.6M44.6 355.5h4.6M50.1 357.5h4.6M18.8 359.4h4.6M42.7 361.3h4.6M42.7 363.3h4.6M50.1 363.3h4.6M12.4 372.9h4.6M29.8 372.9h4.6M22.5 401.9h4.6M12.4 403.8h4.6M16.0 407.6h4.6M16.0 409.6h4.6M20.6 423.1h4.6M16.0 428.9h4.6M17.9 434.7h4.6M42.7 434.7h4.6M50.1 434.7h4.6M12.4 438.5h4.6M19.7 438.5h4.6M12.4 440.4h4.6M26.2 440.4h4.6M15.1 444.3h4.6M44.6 446.2h4.6M57.4 446.2h4.6M15.1 452.0h4.6M16.0 454.0h4.6M44.6 457.8h4.6M50.1 459.8h4.6M18.8 461.7h4.6M42.7 463.6h4.6M42.7 465.5h4.6M50.1 465.5h4.6M12.4 475.2h4.6M29.8 475.2h4.6M22.5 504.1h4.6M12.4 506.1h4.6M16.0 509.9h4.6M16.0 511.9h4.6" stroke="#e89a9e" stroke-width="1.100" stroke-dasharray="1.300 0.500" fill="none"/><path d="M20.6 0.4h6.4M28.0 0.4h0.9M34.4 0.4h0.9M34.4 2.3h1.8M27.1 4.3h0.9M12.4 6.2h0.9M14.2 13.9h6.4M25.2 13.9h1.8M28.0 13.9h0.9M21.6 19.7h0.9M33.5 19.7h0.9M12.4 21.6h0.9M12.4 25.5h5.5M22.5 25.5h11.0M40.9 25.5h0.9M48.2 25.5h0.9M54.7 25.5h7.4M17.9 29.4h0.9M24.3 29.4h12.9M17.9 31.3h0.9M19.7 31.3h6.4M30.8 31.3h0.9M32.6 31.3h0.9M34.4 31.3h1.8M14.2 35.2h0.9M19.7 35.2h9.2M29.8 35.2h1.8M33.5 35.2h0.9M35.4 35.2h0.9M42.7 37.1h0.9M49.2 37.1h5.5M55.6 37.1h0.9M62.0 37.1h0.9M12.4 39.0h0.9M14.2 42.9h0.9M20.6 42.9h1.8M26.2 42.9h0.9M28.0 42.9h0.9M20.6 44.8h6.4M28.0 44.8h0.9M24.3 46.7h0.9M32.6 46.7h1.8M63.9 46.7h0.9M41.8 48.7h1.8M49.2 48.7h0.9M40.9 50.6h1.8M43.6 50.6h6.4M54.7 50.6h0.9M56.5 50.6h2.8M17.9 52.5h0.9M23.4 52.5h9.2M33.5 52.5h1.8M37.2 52.5h0.9M39.0 52.5h0.9M40.9 54.5h0.9M47.3 54.5h7.4M61.1 54.5h0.9M63.0 54.5h0.9M40.9 56.4h0.9M48.2 56.4h0.9M54.7 56.4h6.4M16.0 58.3h0.9M27.1 60.2h0.9M12.4 62.2h0.9M17.0 66.0h10.1M28.0 66.0h0.9M34.4 66.0h0.9M22.5 69.9h0.9M8.7 71.8h0.9M17.0 95.0h5.5M27.1 95.0h0.9M29.8 95.0h0.9M31.7 95.0h0.9M17.0 96.9h6.4M24.3 96.9h0.9M29.8 96.9h0.9M31.7 96.9h0.9M33.5 96.9h1.8M36.3 96.9h1.8M39.0 96.9h8.3M48.2 96.9h1.8M51.0 96.9h5.5M14.2 100.8h1.8M20.6 100.8h12.9M34.4 100.8h0.9M20.6 102.7h6.4M28.0 102.7h0.9M34.4 102.7h0.9M34.4 104.6h1.8M27.1 106.6h0.9M12.4 108.5h0.9M14.2 116.2h6.4M25.2 116.2h1.8M28.0 116.2h0.9M21.6 122.0h0.9M33.5 122.0h0.9M12.4 123.9h0.9M12.4 127.8h5.5M22.5 127.8h11.0M40.9 127.8h0.9M48.2 127.8h0.9M54.7 127.8h7.4M17.9 131.7h0.9M24.3 131.7h12.9M17.9 133.6h0.9M19.7 133.6h6.4M30.8 133.6h0.9M32.6 133.6h0.9M34.4 133.6h1.8M14.2 137.4h0.9M19.7 137.4h9.2M29.8 137.4h1.8M33.5 137.4h0.9M35.4 137.4h0.9M42.7 139.4h0.9M49.2 139.4h5.5M55.6 139.4h0.9M62.0 139.4h0.9M12.4 141.3h0.9M14.2 145.2h0.9M20.6 145.2h1.8M26.2 145.2h0.9M28.0 145.2h0.9M20.6 147.1h6.4M28.0 147.1h0.9M24.3 149.0h0.9M32.6 149.0h1.8M63.9 149.0h0.9M41.8 151.0h1.8M49.2 151.0h0.9M40.9 152.9h1.8M43.6 152.9h6.4M54.7 152.9h0.9M56.5 152.9h2.8M17.9 154.8h0.9M23.4 154.8h9.2M33.5 154.8h1.8M37.2 154.8h0.9M39.0 154.8h0.9M40.9 156.7h0.9M47.3 156.7h7.4M61.1 156.7h0.9M63.0 156.7h0.9M40.9 158.7h0.9M48.2 158.7h0.9M54.7 158.7h6.4M16.0 160.6h0.9M27.1 162.5h0.9M12.4 164.5h0.9M17.0 168.3h10.1M28.0 168.3h0.9M34.4 168.3h0.9M22.5 172.2h0.9M8.7 174.1h0.9M17.0 197.3h5.5M27.1 197.3h0.9M29.8 197.3h0.9M31.7 197.3h0.9M17.0 199.2h6.4M24.3 199.2h0.9M29.8 199.2h0.9M31.7 199.2h0.9M33.5 199.2h1.8M36.3 199.2h1.8M39.0 199.2h8.3M48.2 199.2h1.8M51.0 199.2h5.5M14.2 203.1h1.8M20.6 203.1h12.9M34.4 203.1h0.9M20.6 205.0h6.4M28.0 205.0h0.9M34.4 205.0h0.9M34.4 206.9h1.8M27.1 208.9h0.9M12.4 210.8h0.9M14.2 218.5h6.4M25.2 218.5h1.8M28.0 218.5h0.9M21.6 224.3h0.9M33.5 224.3h0.9M12.4 226.2h0.9M12.4 230.1h5.5M22.5 230.1h11.0M40.9 230.1h0.9M48.2 230.1h0.9M54.7 230.1h7.4M17.9 233.9h0.9M24.3 233.9h12.9M17.9 235.9h0.9M19.7 235.9h6.4M30.8 235.9h0.9M32.6 235.9h0.9M34.4 235.9h1.8M14.2 239.7h0.9M19.7 239.7h9.2M29.8 239.7h1.8M33.5 239.7h0.9M35.4 239.7h0.9M42.7 241.7h0.9M49.2 241.7h5.5M55.6 241.7h0.9M62.0 241.7h0.9M12.4 243.6h0.9M14.2 247.5h0.9M20.6 247.5h1.8M26.2 247.5h0.9M28.0 247.5h0.9M20.6 249.4h6.4M28.0 249.4h0.9M24.3 251.3h0.9M32.6 251.3h1.8M63.9 251.3h0.9M41.8 253.2h1.8M49.2 253.2h0.9M40.9 255.2h1.8M43.6 255.2h6.4M54.7 255.2h0.9M56.5 255.2h2.8M17.9 257.1h0.9M23.4 257.1h9.2M33.5 257.1h1.8M37.2 257.1h0.9M39.0 257.1h0.9M40.9 259.0h0.9M47.3 259.0h7.4M61.1 259.0h0.9M63.0 259.0h0.9M40.9 261.0h0.9M48.2 261.0h0.9M54.7 261.0h6.4M16.0 262.9h0.9M27.1 264.8h0.9M12.4 266.8h0.9M17.0 270.6h10.1M28.0 270.6h0.9M34.4 270.6h0.9M22.5 274.5h0.9M8.7 276.4h0.9M17.0 299.6h5.5M27.1 299.6h0.9M29.8 299.6h0.9M31.7 299.6h0.9M17.0 301.5h6.4M24.3 301.5h0.9M29.8 301.5h0.9M31.7 301.5h0.9M33.5 301.5h1.8M36.3 301.5h1.8M39.0 301.5h8.3M48.2 301.5h1.8M51.0 301.5h5.5M14.2 305.4h1.8M20.6 305.4h12.9M34.4 305.4h0.9M20.6 307.3h6.4M28.0 307.3h0.9M34.4 307.3h0.9M34.4 309.2h1.8M27.1 311.1h0.9M12.4 313.1h0.9M14.2 320.8h6.4M25.2 320.8h1.8M28.0 320.8h0.9M21.6 326.6h0.9M33.5 326.6h0.9M12.4 328.5h0.9M12.4 332.4h5.5M22.5 332.4h11.0M40.9 332.4h0.9M48.2 332.4h0.9M54.7 332.4h7.4M17.9 336.2h0.9M24.3 336.2h12.9M17.9 338.2h0.9M19.7 338.2h6.4M30.8 338.2h0.9M32.6 338.2h0.9M34.4 338.2h1.8M14.2 342.0h0.9M19.7 342.0h9.2M29.8 342.0h1.8M33.5 342.0h0.9M35.4 342.0h0.9M42.7 343.9h0.9M49.2 343.9h5.5M55.6 343.9h0.9M62.0 343.9h0.9M12.4 345.9h0.9M14.2 349.7h0.9M20.6 349.7h1.8M26.2 349.7h0.9M28.0 349.7h0.9M20.6 351.7h6.4M28.0 351.7h0.9M24.3 353.6h0.9M32.6 353.6h1.8M63.9 353.6h0.9M41.8 355.5h1.8M49.2 355.5h0.9M40.9 357.5h1.8M43.6 357.5h6.4M54.7 357.5h0.9M56.5 357.5h2.8M17.9 359.4h0.9M23.4 359.4h9.2M33.5 359.4h1.8M37.2 359.4h0.9M39.0 359.4h0.9M40.9 361.3h0.9M47.3 361.3h7.4M61.1 361.3h0.9M63.0 361.3h0.9M40.9 363.3h0.9M48.2 363.3h0.9M54.7 363.3h6.4M16.0 365.2h0.9M27.1 367.1h0.9M12.4 369.0h0.9M17.0 372.9h10.1M28.0 372.9h0.9M34.4 372.9h0.9M22.5 376.8h0.9M8.7 378.7h0.9M17.0 401.9h5.5M27.1 401.9h0.9M29.8 401.9h0.9M31.7 401.9h0.9M17.0 403.8h6.4M24.3 403.8h0.9M29.8 403.8h0.9M31.7 403.8h0.9M33.5 403.8h1.8M36.3 403.8h1.8M39.0 403.8h8.3M48.2 403.8h1.8M51.0 403.8h5.5M14.2 407.6h1.8M20.6 407.6h12.9M34.4 407.6h0.9M20.6 409.6h6.4M28.0 409.6h0.9M34.4 409.6h0.9M34.4 411.5h1.8M27.1 413.4h0.9M12.4 415.4h0.9M14.2 423.1h6.4M25.2 423.1h1.8M28.0 423.1h0.9M21.6 428.9h0.9M33.5 428.9h0.9M12.4 430.8h0.9M12.4 434.7h5.5M22.5 434.7h11.0M40.9 434.7h0.9M48.2 434.7h0.9M54.7 434.7h7.4M17.9 438.5h0.9M24.3 438.5h12.9M17.9 440.4h0.9M19.7 440.4h6.4M30.8 440.4h0.9M32.6 440.4h0.9M34.4 440.4h1.8M14.2 444.3h0.9M19.7 444.3h9.2M29.8 444.3h1.8M33.5 444.3h0.9M35.4 444.3h0.9M42.7 446.2h0.9M49.2 446.2h5.5M55.6 446.2h0.9M62.0 446.2h0.9M12.4 448.2h0.9M14.2 452.0h0.9M20.6 452.0h1.8M26.2 452.0h0.9M28.0 452.0h0.9M20.6 454.0h6.4M28.0 454.0h0.9M24.3 455.9h0.9M32.6 455.9h1.8M63.9 455.9h0.9M41.8 457.8h1.8M49.2 457.8h0.9M40.9 459.8h1.8M43.6 459.8h6.4M54.7 459.8h0.9M56.5 459.8h2.8M17.9 461.7h0.9M23.4 461.7h9.2M33.5 461.7h1.8M37.2 461.7h0.9M39.0 461.7h0.9M40.9 463.6h0.9M47.3 463.6h7.4M61.1 463.6h0.9M63.0 463.6h0.9M40.9 465.5h0.9M48.2 465.5h0.9M54.7 465.5h6.4M16.0 467.5h0.9M27.1 469.4h0.9M12.4 471.3h0.9M17.0 475.2h10.1M28.0 475.2h0.9M34.4 475.2h0.9M22.5 479.1h0.9M8.7 481.0h0.9M17.0 504.1h5.5M27.1 504.1h0.9M29.8 504.1h0.9M31.7 504.1h0.9M17.0 506.1h6.4M24.3 506.1h0.9M29.8 506.1h0.9M31.7 506.1h0.9M33.5 506.1h1.8M36.3 506.1h1.8M39.0 506.1h8.3M48.2 506.1h1.8M51.0 506.1h5.5M14.2 509.9h1.8M20.6 509.9h12.9M34.4 509.9h0.9M20.6 511.9h6.4M28.0 511.9h0.9M34.4 511.9h0.9M34.4 513.8h1.8M27.1 515.7h0.9M12.4 517.6h0.9" stroke="#c4c6c8" stroke-width="1.100" stroke-dasharray="1.300 0.500" fill="none"/><path d="M29.8 0.4h4.6M16.0 4.3h5.5M22.5 4.3h4.6M12.4 13.9h1.8M12.4 35.2h1.8M16.0 37.1h3.7M12.4 42.9h1.8M19.7 46.7h4.6M16.0 52.5h1.8M19.7 54.5h3.7M16.0 60.2h5.5M22.5 60.2h4.6M12.4 69.9h5.5M18.8 69.9h3.7M8.7 95.0h7.4M26.2 96.9h3.7M12.4 100.8h1.8M29.8 102.7h4.6M16.0 106.6h5.5M22.5 106.6h4.6M12.4 116.2h1.8M12.4 137.4h1.8M16.0 139.4h3.7M12.4 145.2h1.8M19.7 149.0h4.6M16.0 154.8h1.8M19.7 156.7h3.7M16.0 162.5h5.5M22.5 162.5h4.6M12.4 172.2h5.5M18.8 172.2h3.7M8.7 197.3h7.4M26.2 199.2h3.7M12.4 203.1h1.8M29.8 205.0h4.6M16.0 208.9h5.5M22.5 208.9h4.6M12.4 218.5h1.8M12.4 239.7h1.8M16.0 241.7h3.7M12.4 247.5h1.8M19.7 251.3h4.6M16.0 257.1h1.8M19.7 259.0h3.7M16.0 264.8h5.5M22.5 264.8h4.6M12.4 274.5h5.5M18.8 274.5h3.7M8.7 299.6h7.4M26.2 301.5h3.7M12.4 305.4h1.8M29.8 307.3h4.6M16.0 311.1h5.5M22.5 311.1h4.6M12.4 320.8h1.8M12.4 342.0h1.8M16.0 343.9h3.7M12.4 349.7h1.8M19.7 353.6h4.6M16.0 359.4h1.8M19.7 361.3h3.7M16.0 367.1h5.5M22.5 367.1h4.6M12.4 376.8h5.5M18.8 376.8h3.7M8.7 401.9h7.4M26.2 403.8h3.7M12.4 407.6h1.8M29.8 409.6h4.6M16.0 413.4h5.5M22.5 413.4h4.6M12.4 423.1h1.8M12.4 444.3h1.8M16.0 446.2h3.7M12.4 452.0h1.8M19.7 455.9h4.6M16.0 461.7h1.8M19.7 463.6h3.7M16.0 469.4h5.5M22.5 469.4h4.6M12.4 479.1h5.5M18.8 479.1h3.7M8.7 504.1h7.4M26.2 506.1h3.7M12.4 509.9h1.8M29.8 511.9h4.6M16.0 515.7h5.5M22.5 515.7h4.6" stroke="#8fbcec" stroke-width="1.100" stroke-dasharray="1.300 0.500" fill="none"/><path d="M27.1 2.3h6.4M37.2 2.3h6.4M44.6 2.3h6.4M51.9 2.3h6.4M59.3 2.3h4.6M64.8 2.3h5.2M23.4 19.7h10.1M33.5 25.5h4.6M39.0 25.5h0.9M20.6 37.1h4.6M26.2 37.1h1.8M28.9 37.1h3.7M33.5 37.1h6.4M40.9 37.1h0.9M25.2 46.7h6.4M35.4 46.7h4.6M40.9 46.7h2.8M44.6 46.7h7.4M52.8 46.7h3.7M57.4 46.7h6.4M30.8 48.7h10.1M30.8 50.6h9.2M24.3 54.5h4.6M29.8 54.5h1.8M32.6 54.5h5.5M39.0 54.5h0.9M54.7 54.5h6.4M36.3 56.4h1.8M39.0 56.4h0.9M28.0 95.0h1.8M27.1 104.6h6.4M37.2 104.6h6.4M44.6 104.6h6.4M51.9 104.6h6.4M59.3 104.6h4.6M64.8 104.6h5.2M23.4 122.0h10.1M33.5 127.8h4.6M39.0 127.8h0.9M20.6 139.4h4.6M26.2 139.4h1.8M28.9 139.4h3.7M33.5 139.4h6.4M40.9 139.4h0.9M25.2 149.0h6.4M35.4 149.0h4.6M40.9 149.0h2.8M44.6 149.0h7.4M52.8 149.0h3.7M57.4 149.0h6.4M30.8 151.0h10.1M30.8 152.9h9.2M24.3 156.7h4.6M29.8 156.7h1.8M32.6 156.7h5.5M39.0 156.7h0.9M54.7 156.7h6.4M36.3 158.7h1.8M39.0 158.7h0.9M28.0 197.3h1.8M27.1 206.9h6.4M37.2 206.9h6.4M44.6 206.9h6.4M51.9 206.9h6.4M59.3 206.9h4.6M64.8 206.9h5.2M23.4 224.3h10.1M33.5 230.1h4.6M39.0 230.1h0.9M20.6 241.7h4.6M26.2 241.7h1.8M28.9 241.7h3.7M33.5 241.7h6.4M40.9 241.7h0.9M25.2 251.3h6.4M35.4 251.3h4.6M40.9 251.3h2.8M44.6 251.3h7.4M52.8 251.3h3.7M57.4 251.3h6.4M30.8 253.2h10.1M30.8 255.2h9.2M24.3 259.0h4.6M29.8 259.0h1.8M32.6 259.0h5.5M39.0 259.0h0.9M54.7 259.0h6.4M36.3 261.0h1.8M39.0 261.0h0.9M28.0 299.6h1.8M27.1 309.2h6.4M37.2 309.2h6.4M44.6 309.2h6.4M51.9 309.2h6.4M59.3 309.2h4.6M64.8 309.2h5.2M23.4 326.6h10.1M33.5 332.4h4.6M39.0 332.4h0.9M20.6 343.9h4.6M26.2 343.9h1.8M28.9 343.9h3.7M33.5 343.9h6.4M40.9 343.9h0.9M25.2 353.6h6.4M35.4 353.6h4.6M40.9 353.6h2.8M44.6 353.6h7.4M52.8 353.6h3.7M57.4 353.6h6.4M30.8 355.5h10.1M30.8 357.5h9.2M24.3 361.3h4.6M29.8 361.3h1.8M32.6 361.3h5.5M39.0 361.3h0.9M54.7 361.3h6.4M36.3 363.3h1.8M39.0 363.3h0.9M28.0 401.9h1.8M27.1 411.5h6.4M37.2 411.5h6.4M44.6 411.5h6.4M51.9 411.5h6.4M59.3 411.5h4.6M64.8 411.5h5.2M23.4 428.9h10.1M33.5 434.7h4.6M39.0 434.7h0.9M20.6 446.2h4.6M26.2 446.2h1.8M28.9 446.2h3.7M33.5 446.2h6.4M40.9 446.2h0.9M25.2 455.9h6.4M35.4 455.9h4.6M40.9 455.9h2.8M44.6 455.9h7.4M52.8 455.9h3.7M57.4 455.9h6.4M30.8 457.8h10.1M30.8 459.8h9.2M24.3 463.6h4.6M29.8 463.6h1.8M32.6 463.6h5.5M39.0 463.6h0.9M54.7 463.6h6.4M36.3 465.5h1.8M39.0 465.5h0.9M28.0 504.1h1.8M27.1 513.8h6.4M37.2 513.8h6.4M44.6 513.8h6.4M51.9 513.8h6.4M59.3 513.8h4.6M64.8 513.8h5.2" stroke="#b9bf78" stroke-width="1.100" stroke-dasharray="1.300 0.500" fill="none"/><path d="M12.4 10.1h0.9M14.2 10.1h1.8M17.0 10.1h0.9M18.8 10.1h7.4M27.1 10.1h2.8M30.8 10.1h2.8M34.4 10.1h3.7M39.0 10.1h5.5M45.5 10.1h8.3M54.7 10.1h8.3M12.4 12.0h0.9M14.2 12.0h0.9M16.0 12.0h7.4M24.3 12.0h2.8M28.0 12.0h1.8M30.8 12.0h3.7M16.0 15.9h0.9M17.9 15.9h1.8M20.6 15.9h3.7M25.2 15.9h1.8M28.0 15.9h8.3M37.2 15.9h3.7M41.8 15.9h3.7M46.4 15.9h1.8M49.2 15.9h8.3M58.4 15.9h6.4M16.0 17.8h0.9M17.9 17.8h1.8M20.6 17.8h3.7M25.2 17.8h1.8M28.0 17.8h2.8M31.7 17.8h5.5M8.7 75.7h2.8M10.5 77.6h0.9M12.4 77.6h4.6M17.9 77.6h2.8M21.6 77.6h3.7M26.2 77.6h6.4M33.5 77.6h1.8M36.3 77.6h2.8M40.0 77.6h3.7M44.6 77.6h6.4M10.5 79.5h0.9M12.4 79.5h3.7M17.0 79.5h4.6M22.5 79.5h3.7M27.1 79.5h3.7M31.7 79.5h1.8M34.4 79.5h2.8M38.1 79.5h2.8M41.8 79.5h5.5M48.2 79.5h2.8M51.9 79.5h1.8M10.5 81.5h0.9M12.4 81.5h2.8M16.0 81.5h3.7M20.6 81.5h4.6M26.2 81.5h5.5M10.5 83.4h0.9M10.5 85.3h0.9M12.4 85.3h9.2M22.5 85.3h3.7M27.1 85.3h2.8M30.8 85.3h3.7M35.4 85.3h3.7M40.0 85.3h3.7M44.6 85.3h7.4M52.8 85.3h5.5M10.5 87.3h0.9M10.5 89.2h0.9M12.4 89.2h3.7M17.0 89.2h3.7M21.6 89.2h7.4M29.8 89.2h2.8M10.5 91.1h0.9M12.4 91.1h3.7M17.0 91.1h3.7M21.6 91.1h4.6M28.0 91.1h0.9M29.8 91.1h3.7M34.4 91.1h3.7M39.0 91.1h3.7M43.6 91.1h2.8M10.5 93.1h1.8M12.4 112.4h0.9M14.2 112.4h1.8M17.0 112.4h0.9M18.8 112.4h7.4M27.1 112.4h2.8M30.8 112.4h2.8M34.4 112.4h3.7M39.0 112.4h5.5M45.5 112.4h8.3M54.7 112.4h8.3M12.4 114.3h0.9M14.2 114.3h0.9M16.0 114.3h7.4M24.3 114.3h2.8M28.0 114.3h1.8M30.8 114.3h3.7M16.0 118.1h0.9M17.9 118.1h1.8M20.6 118.1h3.7M25.2 118.1h1.8M28.0 118.1h8.3M37.2 118.1h3.7M41.8 118.1h3.7M46.4 118.1h1.8M49.2 118.1h8.3M58.4 118.1h6.4M16.0 120.1h0.9M17.9 120.1h1.8M20.6 120.1h3.7M25.2 120.1h1.8M28.0 120.1h2.8M31.7 120.1h5.5M8.7 178.0h2.8M10.5 179.9h0.9M12.4 179.9h4.6M17.9 179.9h2.8M21.6 179.9h3.7M26.2 179.9h6.4M33.5 179.9h1.8M36.3 179.9h2.8M40.0 179.9h3.7M44.6 179.9h6.4M10.5 181.8h0.9M12.4 181.8h3.7M17.0 181.8h4.6M22.5 181.8h3.7M27.1 181.8h3.7M31.7 181.8h1.8M34.4 181.8h2.8M38.1 181.8h2.8M41.8 181.8h5.5M48.2 181.8h2.8M51.9 181.8h1.8M10.5 183.8h0.9M12.4 183.8h2.8M16.0 183.8h3.7M20.6 183.8h4.6M26.2 183.8h5.5M10.5 185.7h0.9M10.5 187.6h0.9M12.4 187.6h9.2M22.5 187.6h3.7M27.1 187.6h2.8M30.8 187.6h3.7M35.4 187.6h3.7M40.0 187.6h3.7M44.6 187.6h7.4M52.8 187.6h5.5M10.5 189.6h0.9M10.5 191.5h0.9M12.4 191.5h3.7M17.0 191.5h3.7M21.6 191.5h7.4M29.8 191.5h2.8M10.5 193.4h0.9M12.4 193.4h3.7M17.0 193.4h3.7M21.6 193.4h4.6M28.0 193.4h0.9M29.8 193.4h3.7M34.4 193.4h3.7M39.0 193.4h3.7M43.6 193.4h2.8M10.5 195.3h1.8M12.4 214.6h0.9M14.2 214.6h1.8M17.0 214.6h0.9M18.8 214.6h7.4M27.1 214.6h2.8M30.8 214.6h2.8M34.4 214.6h3.7M39.0 214.6h5.5M45.5 214.6h8.3M54.7 214.6h8.3M12.4 216.6h0.9M14.2 216.6h0.9M16.0 216.6h7.4M24.3 216.6h2.8M28.0 216.6h1.8M30.8 216.6h3.7M16.0 220.4h0.9M17.9 220.4h1.8M20.6 220.4h3.7M25.2 220.4h1.8M28.0 220.4h8.3M37.2 220.4h3.7M41.8 220.4h3.7M46.4 220.4h1.8M49.2 220.4h8.3M58.4 220.4h6.4M16.0 222.4h0.9M17.9 222.4h1.8M20.6 222.4h3.7M25.2 222.4h1.8M28.0 222.4h2.8M31.7 222.4h5.5M8.7 280.3h2.8M10.5 282.2h0.9M12.4 282.2h4.6M17.9 282.2h2.8M21.6 282.2h3.7M26.2 282.2h6.4M33.5 282.2h1.8M36.3 282.2h2.8M40.0 282.2h3.7M44.6 282.2h6.4M10.5 284.1h0.9M12.4 284.1h3.7M17.0 284.1h4.6M22.5 284.1h3.7M27.1 284.1h3.7M31.7 284.1h1.8M34.4 284.1h2.8M38.1 284.1h2.8M41.8 284.1h5.5M48.2 284.1h2.8M51.9 284.1h1.8M10.5 286.1h0.9M12.4 286.1h2.8M16.0 286.1h3.7M20.6 286.1h4.6M26.2 286.1h5.5M10.5 288.0h0.9M10.5 289.9h0.9M12.4 289.9h9.2M22.5 289.9h3.7M27.1 289.9h2.8M30.8 289.9h3.7M35.4 289.9h3.7M40.0 289.9h3.7M44.6 289.9h7.4M52.8 289.9h5.5M10.5 291.8h0.9M10.5 293.8h0.9M12.4 293.8h3.7M17.0 293.8h3.7M21.6 293.8h7.4M29.8 293.8h2.8M10.5 295.7h0.9M12.4 295.7h3.7M17.0 295.7h3.7M21.6 295.7h4.6M28.0 295.7h0.9M29.8 295.7h3.7M34.4 295.7h3.7M39.0 295.7h3.7M43.6 295.7h2.8M10.5 297.6h1.8M12.4 316.9h0.9M14.2 316.9h1.8M17.0 316.9h0.9M18.8 316.9h7.4M27.1 316.9h2.8M30.8 316.9h2.8M34.4 316.9h3.7M39.0 316.9h5.5M45.5 316.9h8.3M54.7 316.9h8.3M12.4 318.9h0.9M14.2 318.9h0.9M16.0 318.9h7.4M24.3 318.9h2.8M28.0 318.9h1.8M30.8 318.9h3.7M16.0 322.7h0.9M17.9 322.7h1.8M20.6 322.7h3.7M25.2 322.7h1.8M28.0 322.7h8.3M37.2 322.7h3.7M41.8 322.7h3.7M46.4 322.7h1.8M49.2 322.7h8.3M58.4 322.7h6.4M16.0 324.7h0.9M17.9 324.7h1.8M20.6 324.7h3.7M25.2 324.7h1.8M28.0 324.7h2.8M31.7 324.7h5.5M8.7 382.6h2.8M10.5 384.5h0.9M12.4 384.5h4.6M17.9 384.5h2.8M21.6 384.5h3.7M26.2 384.5h6.4M33.5 384.5h1.8M36.3 384.5h2.8M40.0 384.5h3.7M44.6 384.5h6.4M10.5 386.4h0.9M12.4 386.4h3.7M17.0 386.4h4.6M22.5 386.4h3.7M27.1 386.4h3.7M31.7 386.4h1.8M34.4 386.4h2.8M38.1 386.4h2.8M41.8 386.4h5.5M48.2 386.4h2.8M51.9 386.4h1.8M10.5 388.3h0.9M12.4 388.3h2.8M16.0 388.3h3.7M20.6 388.3h4.6M26.2 388.3h5.5M10.5 390.3h0.9M10.5 392.2h0.9M12.4 392.2h9.2M22.5 392.2h3.7M27.1 392.2h2.8M30.8 392.2h3.7M35.4 392.2h3.7M40.0 392.2h3.7M44.6 392.2h7.4M52.8 392.2h5.5M10.5 394.1h0.9M10.5 396.1h0.9M12.4 396.1h3.7M17.0 396.1h3.7M21.6 396.1h7.4M29.8 396.1h2.8M10.5 398.0h0.9M12.4 398.0h3.7M17.0 398.0h3.7M21.6 398.0h4.6M28.0 398.0h0.9M29.8 398.0h3.7M34.4 398.0h3.7M39.0 398.0h3.7M43.6 398.0h2.8M10.5 399.9h1.8M12.4 419.2h0.9M14.2 419.2h1.8M17.0 419.2h0.9M18.8 419.2h7.4M27.1 419.2h2.8M30.8 419.2h2.8M34.4 419.2h3.7M39.0 419.2h5.5M45.5 419.2h8.3M54.7 419.2h8.3M12.4 421.2h0.9M14.2 421.2h0.9M16.0 421.2h7.4M24.3 421.2h2.8M28.0 421.2h1.8M30.8 421.2h3.7M16.0 425.0h0.9M17.9 425.0h1.8M20.6 425.0h3.7M25.2 425.0h1.8M28.0 425.0h8.3M37.2 425.0h3.7M41.8 425.0h3.7M46.4 425.0h1.8M49.2 425.0h8.3M58.4 425.0h6.4M16.0 426.9h0.9M17.9 426.9h1.8M20.6 426.9h3.7M25.2 426.9h1.8M28.0 426.9h2.8M31.7 426.9h5.5M8.7 484.8h2.8M10.5 486.8h0.9M12.4 486.8h4.6M17.9 486.8h2.8M21.6 486.8h3.7M26.2 486.8h6.4M33.5 486.8h1.8M36.3 486.8h2.8M40.0 486.8h3.7M44.6 486.8h6.4M10.5 488.7h0.9M12.4 488.7h3.7M17.0 488.7h4.6M22.5 488.7h3.7M27.1 488.7h3.7M31.7 488.7h1.8M34.4 488.7h2.8M38.1 488.7h2.8M41.8 488.7h5.5M48.2 488.7h2.8M51.9 488.7h1.8M10.5 490.6h0.9M12.4 490.6h2.8M16.0 490.6h3.7M20.6 490.6h4.6M26.2 490.6h5.5M10.5 492.6h0.9M10.5 494.5h0.9M12.4 494.5h9.2M22.5 494.5h3.7M27.1 494.5h2.8M30.8 494.5h3.7M35.4 494.5h3.7M40.0 494.5h3.7M44.6 494.5h7.4M52.8 494.5h5.5M10.5 496.4h0.9M10.5 498.4h0.9M12.4 498.4h3.7M17.0 498.4h3.7M21.6 498.4h7.4M29.8 498.4h2.8M10.5 500.3h0.9M12.4 500.3h3.7M17.0 500.3h3.7M21.6 500.3h4.6M28.0 500.3h0.9M29.8 500.3h3.7M34.4 500.3h3.7M39.0 500.3h3.7M43.6 500.3h2.8M10.5 502.2h1.8" stroke="#cfd2d4" stroke-width="1.100" stroke-dasharray="1.300 0.500" fill="none"/><path d="M31.7 31.3h0.9M33.5 31.3h0.9M32.6 35.2h0.9M23.4 42.9h2.8M55.6 50.6h0.9M36.3 52.5h0.9M31.7 133.6h0.9M33.5 133.6h0.9M32.6 137.4h0.9M23.4 145.2h2.8M55.6 152.9h0.9M36.3 154.8h0.9M31.7 235.9h0.9M33.5 235.9h0.9M32.6 239.7h0.9M23.4 247.5h2.8M55.6 255.2h0.9M36.3 257.1h0.9M31.7 338.2h0.9M33.5 338.2h0.9M32.6 342.0h0.9M23.4 349.7h2.8M55.6 357.5h0.9M36.3 359.4h0.9M31.7 440.4h0.9M33.5 440.4h0.9M32.6 444.3h0.9M23.4 452.0h2.8M55.6 459.8h0.9M36.3 461.7h0.9" stroke="#a9b0e0" stroke-width="1.100" stroke-dasharray="1.300 0.500" fill="none"/><rect x="0" y="236" width="70" height="2" fill="#dc2f2f"/></svg></div>
<div class="abs" style="left:955px;top:114px;width:17px;height:520px;background:#f0f0f0"></div>
<div class="abs" style="left:955px;top:339px;width:15px;height:17px;background:#cdcdcd"></div>
<svg class="abs" style="left:959px;top:119.5px" width="9" height="7" viewBox="0 0 9 7"><path d="M1 5.800l3.500-3.800 3.500 3.800" fill="none" stroke="#404040" stroke-width="1.900"/></svg>
<svg class="abs" style="left:959px;top:622px" width="9" height="7" viewBox="0 0 9 7"><path d="M1 1.200l3.500 3.800 3.500-3.800" fill="none" stroke="#404040" stroke-width="1.900"/></svg>
<div class="abs" style="left:245px;top:634px;width:727px;height:16px;background:#f0f0f0"></div>
<div class="abs" style="left:262px;top:634px;width:520px;height:15px;background:#cdcdcd"></div>
<svg class="abs" style="left:250px;top:637px" width="7" height="9" viewBox="0 0 7 9"><path d="M5.800 1l-3.800 3.500 3.800 3.500" fill="none" stroke="#404040" stroke-width="1.900"/></svg>
<svg class="abs" style="left:942px;top:637px" width="7" height="9" viewBox="0 0 7 9"><path d="M1.200 1l3.800 3.500-3.800 3.500" fill="none" stroke="#404040" stroke-width="1.900"/></svg>
<svg class="abs" style="left:245px;top:650px" width="727" height="24" viewBox="0 0 727 24"><rect x="0" y="0" width="727" height="24" fill="#eff3fb"/><path d="M249.500 0.500H361.500L341.500 21.500H253Q249.500 21.500 249.500 18z" fill="#fff" stroke="#8a8a8a"/><path d="M144.500 0.500H258.500L237.500 21.500H148Q144.500 21.500 144.500 18z" fill="#fff" stroke="#8a8a8a"/><path d="M81.500 0.500H152.500L132.500 21.500H85Q81.500 21.500 81.500 18z" fill="#fff" stroke="#8a8a8a"/><path d="M0 0H91L70 21.500H4Q0.500 21.500 0.500 18V0z" fill="#f0f0f0"/><path d="M0.500 0V18Q0.500 21.500 4 21.500H70L91 0.500H727" fill="none" stroke="#8a8a8a"/></svg>
<span class="t" style="left:250.3px;top:653px;letter-spacing:-0.48px;font-weight:bold;color:#000;">Code Editor</span>
<span class="t" style="left:333.6px;top:653px;letter-spacing:-0.43px;">Preview</span>
<span class="t" style="left:397.4px;top:653px;letter-spacing:-0.101px;">H-Split Preview</span>
<span class="t" style="left:503.3px;top:653px;letter-spacing:-0.143px;">V-Split Preview</span>
<div class="abs" style="left:495px;top:234px;width:209px;height:52px;background:#ffffe1;border:1px solid #ecebd0;box-shadow:2px 2px 1px rgba(0,0,0,.62)"></div>
<span class="t" style="left:500.8px;top:237px;letter-spacing:0.034px;color:#000;">bool empty (</span>
<span class="t" style="left:567.8px;top:237px;letter-spacing:-0.023px;font-weight:bold;color:#000;">mixed $var</span>
<span class="t" style="left:630.6px;top:237px;color:#000;">)</span>
<span class="t" style="left:500.8px;top:252px;letter-spacing:-0.115px;color:#727272;">Determine whether a variable is empty</span>
<span class="t" style="left:500.8px;top:267px;letter-spacing:-0.108px;color:#727272;">class: PHP built-in</span>
<div class="abs" style="left:724px;top:272px;width:154px;height:51px;background:#eff3fb;border:2px solid #8390a8"></div>
<div class="abs" style="left:727px;top:275px;width:148px;height:22px;background:#8390a8"></div>
<span class="t" style="left:729.3px;top:278px;letter-spacing:-0.213px;color:#fff;">Run and Debug</span>
<svg class="abs" style="left:725px;top:273px" width="153" height="50" viewBox="0 0 153 50"><path d="M112 11.500h8l-4 4.500z" fill="#fff"/><path d="M135 9l8 7.500M143 9l-8 7.500" stroke="#fff" stroke-width="1.500"/><path d="M6 29l15.500 7.500-15.500 7.500z" fill="#3d9a6a"/><path d="M26.500 34h6l-3 3.500z" fill="#222"/><rect x="40" y="30" width="12" height="12" fill="#cdd1d4"/><g fill="none" stroke="#c3c8cb" stroke-width="1"><path d="M69 28.500h-6.500v13.200h5.500M66.200 39.500l2.200 2.200-2.200 2.200M67 31.200h9.800M70.200 33.300h6.600M70.200 35.300h6.600M67 37.400h9.800"/><path d="M94.600 29.500h-9.600v9.200h5.500M88.700 36.500l2.200 2.200-2.200 2.200M90 33.300h9.800M93 35.400h6.800M93 37.400h6.800M93 39.500h6.800M93 41.500h6.800M90 43.600h9.800"/><path d="M115.200 30.500h-6.900v8.200h4.300M113.200 28.300l2.200 2.200-2.200 2.200M112 34.100h9.900M115.200 36.200h6.700M115.200 38.200h6.700M115.200 40.300h6.700M112 42.300h9.900"/></g><circle cx="138.100" cy="35.900" r="6.900" fill="#c64d33"/></svg>
<div class="call" style="left:102px;top:154px;width:143px;height:31px"><svg class="abs" style="left:64.5px;top:30.5px" width="12" height="6" viewBox="0 0 12 6"><path d="M0.500 0h11l-5.500 5.500z" fill="#7ab51d"/></svg></div>
<span class="t" style="left:124.9px;top:158.6px;letter-spacing:-0.248px;font-size:15.5px;color:#fff;line-height:20px;height:20px;">Code Explorer</span>
<div class="call" style="left:596px;top:126px;width:143px;height:31px"><svg class="abs" style="left:65.5px;top:30.5px" width="12" height="6" viewBox="0 0 12 6"><path d="M0.500 0h11l-5.500 5.500z" fill="#7ab51d"/></svg></div>
<span class="t" style="left:614.8px;top:131px;letter-spacing:0.023px;font-size:15.5px;color:#fff;line-height:20px;height:20px;">Powerful editor</span>
<div class="call" style="left:524px;top:298px;width:143px;height:30.5px"><svg class="abs" style="left:65.5px;top:-5.500px" width="12" height="6" viewBox="0 0 12 6"><path d="M0.500 6h11l-5.500-5.500z" fill="#7ab51d"/></svg></div>
<span class="t" style="left:535.4px;top:302.6px;letter-spacing:0.005px;font-size:15.5px;color:#fff;line-height:20px;height:20px;">Code intelligence</span>
<div class="call" style="left:729px;top:336px;width:143px;height:30.5px"><svg class="abs" style="left:65.20000000000005px;top:-5.500px" width="12" height="6" viewBox="0 0 12 6"><path d="M0.500 6h11l-5.500-5.500z" fill="#7ab51d"/></svg></div>
<span class="t" style="left:742.5px;top:340.9px;letter-spacing:0.241px;font-size:15.5px;color:#fff;line-height:20px;height:20px;">Debugging tools</span>
</body></html>
